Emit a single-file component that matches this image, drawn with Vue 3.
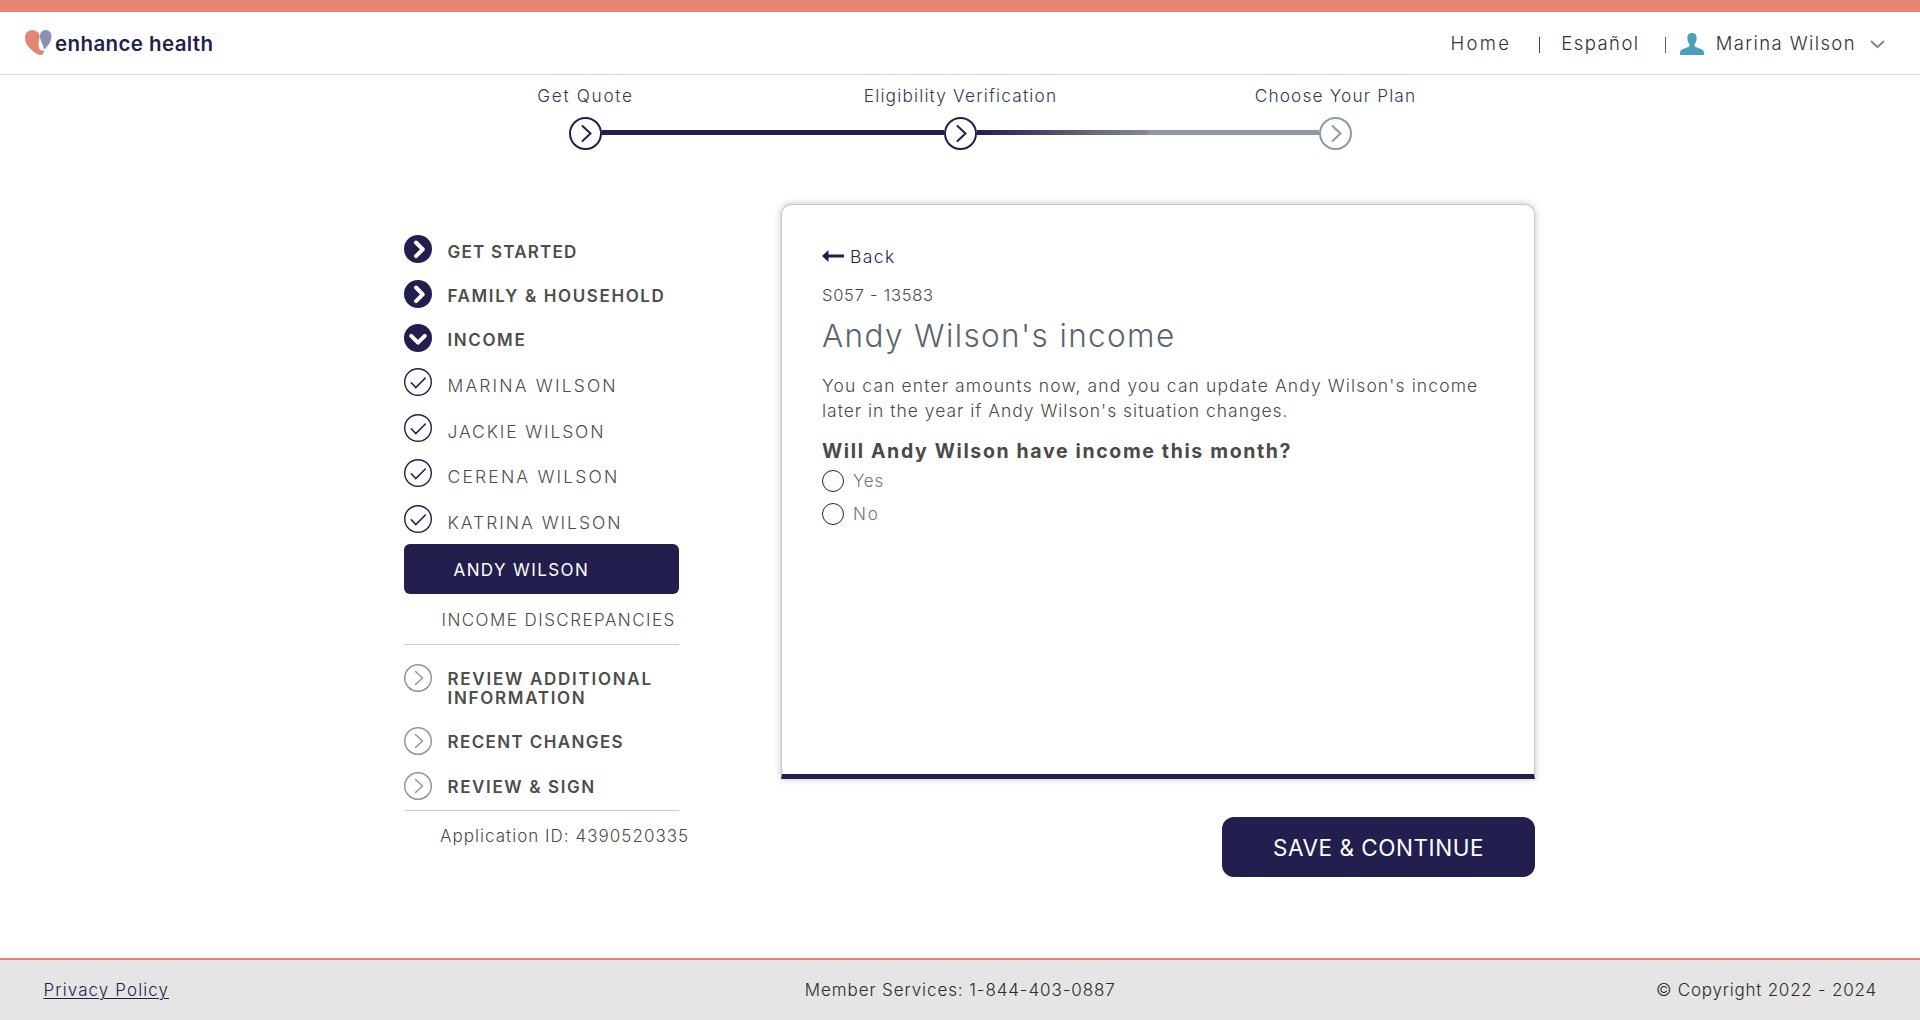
<script setup>
const steps = [
  { label: 'Get Quote', ls: 1.65 },
  { label: 'Eligibility Verification', ls: 1.17 },
  { label: 'Choose Your Plan', ls: 1.15 },
]
const done = [
  { label: 'GET STARTED', icon: 'right', ls: 1.22, gap: 17, drop: 3 },
  { label: 'FAMILY & HOUSEHOLD', icon: 'right', ls: 1.62, gap: 16, drop: 2 },
  { label: 'INCOME', icon: 'down', ls: 1.6, gap: 16, drop: 2 },
  { label: 'MARINA WILSON', icon: 'check', ls: 2.16, gap: 18, drop: 4 },
  { label: 'JACKIE WILSON', icon: 'check', ls: 1.85, gap: 17, drop: 4 },
  { label: 'CERENA WILSON', icon: 'check', ls: 2.18, gap: 18, drop: 4 },
  { label: 'KATRINA WILSON', icon: 'check', ls: 1.97, gap: 11, drop: 4 },
]
const px = (n) => n + 'px'
</script>

<template>
  <div class="page">
    <header class="header">
      <a class="logo">
        <svg width="27" height="26" viewBox="0 0 27 26">
          <path fill="#e68571" d="M7 .3C3 .3 0 3 0 7.400 0 15 6.500 20.500 12.500 24.200 15.800 26 19.500 24.300 18.900 20.200 16.500 21.600 13.300 19.500 13.500 14 13.600 10 15.200 7.500 14.500 5 13.500 1.500 10 .3 7 .3Z" />
          <path fill="#8890b5" d="M20.500 0C17 0 14.600 3 15 7 15.500 11 17.800 14 19 19.500 23.200 16.200 26.500 11 26.500 6 26.500 2 23.500 0 20.500 0Z" />
        </svg>
        <span class="brand">enhance health</span>
      </a>
      <nav class="nav">
        <a class="home">Home</a>
        <i class="bar navy"></i>
        <a class="lang">Español</a>
        <i class="bar blue"></i>
        <svg class="avatar" width="24" height="22" viewBox="0 0 24 22">
          <path fill="#4a9fb9" d="M12 0c3.300 0 5 2.200 4.600 5.600-.2 2.400-.9 4.400-2 5.600v1.900c1 1.400 3.600 1.800 6.400 2.900 2.100.8 3 2 3 4.200V22H0v-1.800c0-2.200.9-3.400 3-4.200 2.800-1.100 5.400-1.500 6.400-2.900v-1.900c-1.100-1.200-1.800-3.200-2-5.600C7 2.200 8.700 0 12 0Z" />
        </svg>
        <a class="user">Marina Wilson</a>
        <svg class="caret" width="15" height="9" viewBox="0 0 15 9" fill="none" stroke="#868686" stroke-width="2">
          <path d="M1 1l6.500 6.200L14 1" />
        </svg>
      </nav>
    </header>

    <main class="main">
      <section class="stepper">
        <div class="labels">
          <span v-for="s in steps" :key="s.label" :style="{ letterSpacing: px(s.ls) }">{{ s.label }}</span>
        </div>
        <div class="track">
          <svg class="node" viewBox="0 0 33 33"><circle cx="16.500" cy="16.500" r="15.500" /><path d="M13.500 9l8 7.500-8 7.500" /></svg>
          <i class="line full"></i>
          <svg class="node" viewBox="0 0 33 33"><circle cx="16.500" cy="16.500" r="15.500" /><path d="M13.500 9l8 7.500-8 7.500" /></svg>
          <i class="line half"></i>
          <svg class="node muted" viewBox="0 0 33 33"><circle cx="16.500" cy="16.500" r="15.500" /><path d="M13.500 9l8 7.500-8 7.500" /></svg>
        </div>
      </section>

      <div class="content">
        <aside class="side">
          <div v-for="r in done" :key="r.label" class="row" :class="{ sub: r.icon === 'check' }" :style="{ marginBottom: px(r.gap) }">
            <svg class="ico" viewBox="0 0 28 28">
              <template v-if="r.icon === 'check'">
                <circle cx="14" cy="14" r="13.300" class="ring" />
                <path d="M7.300 14.800l4.500 4.700L21.300 10" class="tick" />
              </template>
              <template v-else>
                <circle cx="14" cy="14" r="14" fill="#221f4f" />
                <path :d="r.icon === 'right' ? 'M12 7.500l6.800 6.800-6.800 6.800' : 'M7.200 11.800l6.800 6.800 6.800-6.800'" class="bold" />
              </template>
            </svg>
            <span :style="{ letterSpacing: px(r.ls), marginTop: px(r.drop) }">{{ r.label }}</span>
          </div>
          <div class="current">ANDY WILSON</div>
          <div class="discrepancies">INCOME DISCREPANCIES</div>
          <div class="row todo first">
            <svg class="ico" viewBox="0 0 28 28"><circle cx="14" cy="14" r="13.300" /><path d="M11.500 7.500l7 6.500-7 6.500" /></svg>
            <span class="two"><b>REVIEW ADDITIONAL</b><br />INFORMATION</span>
          </div>
          <div class="row todo second">
            <svg class="ico" viewBox="0 0 28 28"><circle cx="14" cy="14" r="13.300" /><path d="M11.500 7.500l7 6.500-7 6.500" /></svg>
            <span class="recent">RECENT CHANGES</span>
          </div>
          <div class="row todo">
            <svg class="ico" viewBox="0 0 28 28"><circle cx="14" cy="14" r="13.300" /><path d="M11.500 7.500l7 6.500-7 6.500" /></svg>
            <span class="sign">REVIEW &amp; SIGN</span>
          </div>
          <div class="appid">Application ID: 4390520335</div>
        </aside>

        <section class="panel">
          <div class="card">
            <a class="back">
              <svg width="22" height="12" viewBox="0 0 22 12"><path fill="#221f4f" d="M0 6L6.500 0V4.600H22V7.400H6.500V12Z" /></svg>
              <span>Back</span>
            </a>
            <div class="code">S057 - 13583</div>
            <h1>Andy Wilson's income</h1>
            <p class="para">
              <span class="l1">You can enter amounts now, and you can update Andy Wilson's income</span><br />
              <span class="l2">later in the year if Andy Wilson's situation changes.</span>
            </p>
            <h2>Will Andy Wilson have income this month?</h2>
            <label class="opt"><i></i><span class="yes">Yes</span></label>
            <label class="opt"><i></i><span class="no">No</span></label>
          </div>
          <button class="save">SAVE &amp; CONTINUE</button>
        </section>
      </div>
    </main>

    <footer class="footer">
      <a class="privacy">Privacy Policy</a>
      <span class="member">Member Services: 1-844-403-0887</span>
      <span class="copy">© Copyright 2022 - 2024</span>
    </footer>
  </div>
</template>

<style>
body { margin: 0; background: #fff; }
</style>

<style scoped>
.page {
  width: 1920px;
  height: 1020px;
  box-sizing: border-box;
  display: flex;
  flex-direction: column;
  overflow: hidden;
  font-family: Inter, "Open Sans", sans-serif;
  font-weight: 300;
  font-size: 17px;
  color: #4a4a4a;
  white-space: nowrap;
}
svg { flex: none; display: block; }

.header {
  height: 75px;
  box-sizing: border-box;
  border-top: 12px solid #e68571;
  border-bottom: 1px solid #d5d5d5;
  display: flex;
  justify-content: space-between;
  align-items: flex-start;
  padding: 0 35px 0 25px;
}
.logo { display: flex; align-items: flex-start; gap: 3px; padding-top: 18px; }
.brand {
  font-size: 20.5px;
  font-weight: 600;
  letter-spacing: 0.4px;
  line-height: 28px;
  color: #221f4f;
}
.nav { display: flex; align-items: center; height: 62px; font-size: 18.5px; color: #333; }
.home { letter-spacing: 2.3px; margin-right: 28px; }
.lang { letter-spacing: 1.45px; margin-left: 21px; margin-right: 25px; }
.bar { width: 1px; height: 16px; margin-top: 4px; }
.navy { background: #4c3a70; }
.blue { background: #5a5f86; }
.avatar { margin: 2px 0 0 14px; }
.user { letter-spacing: 1.4px; margin-left: 12px; }
.caret { margin: 3px 0 0 14px; }

.main { height: 883px; display: flex; flex-direction: column; }
.stepper { height: 129px; padding-top: 11px; box-sizing: border-box; }
.labels {
  width: 1125px;
  margin-left: 398px;
  display: flex;
  font-size: 17.3px;
  line-height: 20px;
  color: #2f3b52;
}
.labels span { flex: 1 1 0; text-align: center; }
.track { width: 783px; margin: 11px 0 0 569px; display: flex; align-items: center; }
.node { width: 33px; height: 33px; fill: none; stroke: #221f4f; stroke-width: 2; stroke-linecap: round; }
.node.muted { stroke: #8f99a6; }
.line { flex: 1; height: 5px; margin-bottom: 2px; }
.full { background: #221f4f; }
.half { background: linear-gradient(90deg, #221f4f, #848b95 50%, #8f99a6 50%); }

.content { display: flex; padding-left: 404px; }
.side { width: 275px; padding-top: 31px; margin-right: 102px; }
.row {
  display: flex;
  height: 28px;
  font-size: 17px;
  font-weight: 600;
  line-height: 28px;
  color: #4d4d4d;
}
.sub { font-size: 17.5px; font-weight: 300; }
.ico { width: 28px; height: 28px; margin-right: 15.5px; fill: none; }
.ring { stroke: #221f4f; stroke-width: 1.4; }
.tick { stroke: #221f4f; stroke-width: 1.6; stroke-linecap: round; }
.bold { stroke: #fff; stroke-width: 4; stroke-linecap: round; stroke-linejoin: round; }
.current {
  height: 50px;
  box-sizing: border-box;
  padding-left: 49.5px;
  border-radius: 6px;
  background: #221f4f;
  color: #fff;
  font-weight: 400;
  line-height: 53px;
  letter-spacing: 1.4px;
}
.discrepancies {
  height: 51px;
  box-sizing: border-box;
  padding-left: 37.5px;
  border-bottom: 1px solid #ccc;
  line-height: 52px;
  letter-spacing: 1.46px;
}
.todo .ico { stroke: #969696; stroke-width: 1.5; stroke-linecap: round; }
.first { height: 63px; padding-top: 19px; box-sizing: border-box; margin-bottom: 19px; }
.two { line-height: 19px; margin-top: 6px; letter-spacing: 1.7px; }
.two b { font-weight: 600; letter-spacing: 1.73px; }
.second { margin-bottom: 17px; }
.recent { letter-spacing: 1.38px; margin-top: 1px; }
.sign { letter-spacing: 1.62px; margin-top: 1px; }
.appid {
  margin-top: 10px;
  padding-left: 36px;
  border-top: 1px solid #ccc;
  line-height: 51px;
  letter-spacing: 1.03px;
}

.panel { width: 754px; display: flex; flex-direction: column; }
.card {
  height: 575px;
  box-sizing: border-box;
  padding: 39px 40px 0;
  border: 1px solid #c4c4c4;
  border-bottom: 5px solid #221f4f;
  border-radius: 10px 10px 0 0;
  box-shadow: 0 0 7px rgba(0, 0, 0, 0.25);
}
.back { display: flex; align-items: center; gap: 6px; height: 24px; font-size: 17.5px; color: #221f4f; letter-spacing: 1.4px; }
.code { margin-top: 13px; font-size: 16.5px; line-height: 28px; letter-spacing: 0.75px; }
h1 {
  margin: 7px 0 0;
  font-size: 31.5px;
  line-height: 40px;
  font-weight: 300;
  letter-spacing: 1.38px;
  color: #5b6470;
}
.para { margin: 17px 0 0; font-size: 17.5px; line-height: 25px; }
.l1 { letter-spacing: 1.11px; }
.l2 { letter-spacing: 0.98px; }
h2 {
  margin: 14px 0 0;
  font-size: 19.5px;
  line-height: 28px;
  font-weight: 700;
  letter-spacing: 1.64px;
  color: #4a4a4a;
}
.opt { display: flex; align-items: center; height: 22px; margin-top: 5px; color: #757575; }
.opt + .opt { margin-top: 11px; }
.opt i { width: 22px; height: 22px; box-sizing: border-box; border: 1px solid #221f4f; border-radius: 50%; margin-right: 9px; }
.yes { letter-spacing: 0.8px; }
.no { letter-spacing: 1.8px; }
.save {
  align-self: flex-end;
  width: 313px;
  height: 60px;
  margin-top: 38px;
  padding: 0;
  border: 0;
  border-radius: 12px;
  background: #221f4f;
  color: #fff;
  font: 400 22.500px/61px Inter, sans-serif;
  letter-spacing: 0.54px;
}

.footer {
  height: 62px;
  box-sizing: border-box;
  border-top: 2px solid #e68571;
  background: #e5e5e5;
  display: grid;
  grid-template-columns: 1fr auto 1fr;
  padding: 0 43px 0 43.5px;
  line-height: 61px;
  color: #2b2b2b;
}
.privacy { color: #221f4f; letter-spacing: 1.1px; text-decoration: underline; text-decoration-thickness: 1px; text-underline-offset: 2px; }
.member { letter-spacing: 0.9px; }
.copy { letter-spacing: 0.77px; text-align: right; }
</style>
